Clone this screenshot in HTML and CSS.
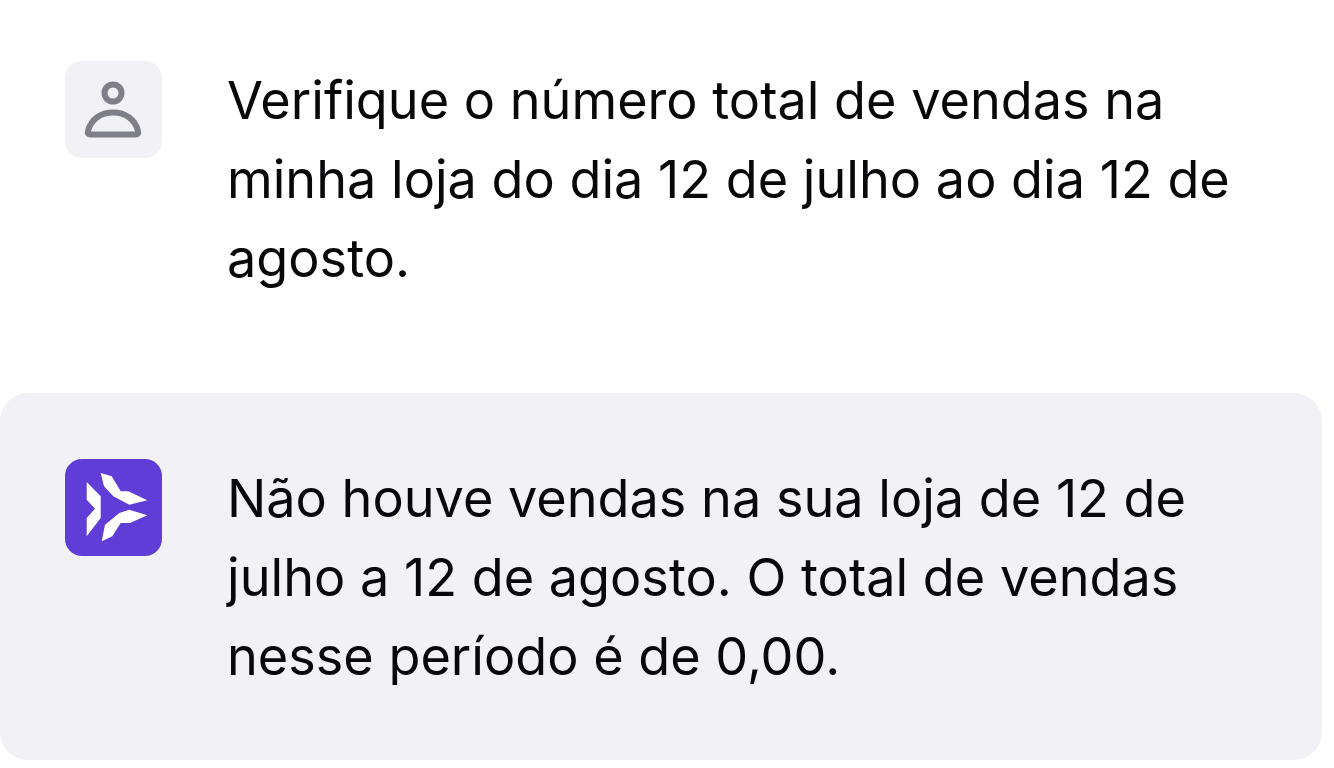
FILE: index.html
```html
<!DOCTYPE html>
<html lang="pt">
<head>
<meta charset="UTF-8">
<meta name="viewport" content="width=device-width, initial-scale=1.0">
<title>Conversa</title>
<link rel="stylesheet" href="styles.css">
</head>
<body>

<div class="chat">
    <div class="message">
        <div class="avatar avatar-user">
            <svg viewBox="0 0 97 97" width="97" height="97">
                <circle cx="48" cy="32" r="8.5" fill="none" stroke="#7f7f88" stroke-width="6"/>
                <path d="M25 73.5 H71 Q74 73.5 73 70 C70 58 60 51.5 48 51.5 C36 51.5 26 58 23 70 Q22 73.5 25 73.5 Z" fill="none" stroke="#7f7f88" stroke-width="6" stroke-linejoin="round"/>
            </svg>
        </div>
        <p class="text">Verifique o número total de vendas na minha loja do dia 12 de julho ao dia 12 de agosto.</p>
    </div>
    <div class="message message-reply">
        <div class="avatar avatar-bot">
            <svg viewBox="0 0 97 97" width="97" height="97">
                <g fill="#fff">
                    <path d="M21.7 23 L35.7 37.3 V59 L21.7 77.3 V59 L30 49.7 L21.7 40.7 Z"/>
                    <path d="M35.7 14 L46.7 17.3 L55.7 32.3 L63.3 32.3 L82.3 41.3 L64.3 45.7 L48.3 37.3 L39 27.3 Z"/>
                    <path d="M36.7 82.3 L40 65.7 L54.3 54 L64.3 50.7 L82.3 56.3 L65 64 L55.7 64 L47.3 77.3 Z"/>
                </g>
            </svg>
        </div>
        <p class="text">Não houve vendas na sua loja de 12 de julho a 12 de agosto. O total de vendas nesse período é de 0,00.</p>
    </div>
</div>

</body>
</html>
```

FILE: styles.css
```css
body {
    font-family: 'Inter', sans-serif;
    background-color: #ffffff;
    margin: 0;
    padding: 0;
}
.chat {
    width: 1322px;
    height: 760px;
    display: flex;
    flex-direction: column;
}
.message {
    display: flex;
    gap: 65px;
    padding: 61px 65px 0;
    height: 393px;
    box-sizing: border-box;
}
.message-reply {
    flex: 1;
    height: auto;
    padding-top: 66px;
    background-color: #f2f2f6;
    border-radius: 28px;
}
.avatar {
    flex: none;
    width: 97px;
    height: 97px;
    border-radius: 17px;
}
.avatar-user {
    background-color: #f2f2f6;
}
.avatar-bot {
    background-color: #5f3dd6;
}
.avatar svg {
    display: block;
}
.text {
    margin: 0;
    width: 1030px;
    font-size: 52.2px;
    line-height: 79px;
    color: #08080a;
}
```
